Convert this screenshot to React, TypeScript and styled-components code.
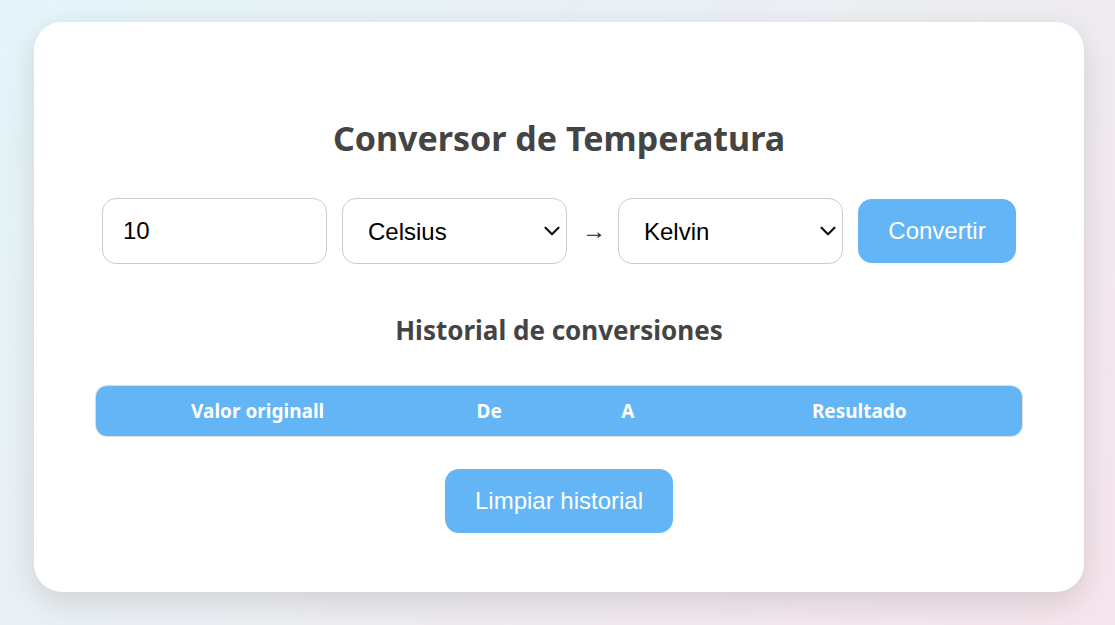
import React, { useState } from "react";
import styled, { createGlobalStyle } from "styled-components";
import { ChevronDown } from "lucide-react";

const Global = createGlobalStyle`
  html, body { margin: 0; padding: 0; }
  body {
    width: 1115px;
    height: 625px;
    overflow: hidden;
    background: linear-gradient(135deg, #e3f4f8 0%, #eceef2 50%, #f6e4ec 100%);
    font-family: "Noto Sans", "Open Sans", sans-serif;
  }
`;

const Page = styled.div`
  box-sizing: border-box;
  height: 625px;
  padding: 22px 31px 33px 34px;
`;

const Card = styled.div`
  box-sizing: border-box;
  width: 1050px;
  height: 570px;
  background: #fff;
  border-radius: 28px;
  box-shadow: 0 10px 30px rgba(0, 0, 0, 0.12);
  padding: 93px 61px 0;
  display: flex;
  flex-direction: column;
  align-items: center;
`;

const Title = styled.h1`
  margin: 0;
  font-size: 34px;
  line-height: 46px;
  font-weight: 700;
  color: #444;
`;

const Row = styled.div`
  margin-top: 37px;
  display: flex;
  align-items: center;
  gap: 15px;
`;

const Field = styled.input`
  box-sizing: border-box;
  width: 225px;
  height: 66px;
  padding: 0 20px;
  border: 1px solid #ccc;
  border-radius: 14px;
  font-family: "Liberation Sans", Arial, sans-serif;
  font-size: 24px;
  color: #000;
  outline: none;
  background: #fff;
`;

const SelectWrap = styled.div`
  position: relative;
  width: 225px;
  height: 66px;
`;

const Select = styled.select`
  box-sizing: border-box;
  width: 225px;
  height: 66px;
  padding: 0 36px 0 25px;
  border: 1px solid #ccc;
  border-radius: 14px;
  font-family: "Liberation Sans", Arial, sans-serif;
  font-size: 24px;
  color: #000;
  background: #fff;
  outline: none;
  appearance: none;
  -webkit-appearance: none;
`;

const Chevron = styled(ChevronDown)`
  position: absolute;
  right: 2px;
  top: 20px;
  color: #111;
  pointer-events: none;
`;

const Arrow = styled.span`
  font-family: "Liberation Sans", Arial, sans-serif;
  font-size: 24px;
  color: #222;
  width: 21px;
  text-align: center;
`;

const Button = styled.button<{ $w: number }>`
  box-sizing: border-box;
  width: ${(p) => p.$w}px;
  height: 64px;
  border: none;
  border-radius: 14px;
  background: #64b5f6;
  color: #fff;
  font-family: "Liberation Sans", Arial, sans-serif;
  font-size: 24px;
  cursor: pointer;
`;

const Subtitle = styled.h2`
  margin: 48px 0 0;
  font-size: 26px;
  line-height: 36px;
  font-weight: 700;
  color: #444;
`;

const Table = styled.table`
  margin-top: 37px;
  width: 928px;
  border-collapse: separate;
  border-spacing: 0;
  border: 1px solid #ddd;
  border-radius: 12px;
  overflow: hidden;
`;

const Th = styled.th<{ $w: number }>`
  width: ${(p) => p.$w}px;
  height: 50px;
  padding: 0;
  background: #64b5f6;
  color: #fff;
  font-size: 19px;
  font-weight: 700;
  text-align: center;
`;

const ClearWrap = styled.div`
  margin-top: 32px;
`;

const units = ["Celsius", "Fahrenheit", "Kelvin"];

function UnitSelect({ initial }: { initial: string }) {
  return (
    <SelectWrap>
      <Select defaultValue={initial}>
        {units.map((u) => (
          <option key={u}>{u}</option>
        ))}
      </Select>
      <Chevron size={26} strokeWidth={2} />
    </SelectWrap>
  );
}

export default function App() {
  const [value, setValue] = useState("10");
  return (
    <>
      <Global />
      <Page>
        <Card>
          <Title>Conversor de Temperatura</Title>
          <Row>
            <Field value={value} onChange={(e) => setValue(e.target.value)} />
            <UnitSelect initial="Celsius" />
            <Arrow>→</Arrow>
            <UnitSelect initial="Kelvin" />
            <Button $w={158}>Convertir</Button>
          </Row>
          <Subtitle>Historial de conversiones</Subtitle>
          <Table>
            <thead>
              <tr>
                <Th $w={324}>Valor originall</Th>
                <Th $w={140}>De</Th>
                <Th $w={138}>A</Th>
                <Th $w={326}>Resultado</Th>
              </tr>
            </thead>
          </Table>
          <ClearWrap>
            <Button $w={228}>Limpiar historial</Button>
          </ClearWrap>
        </Card>
      </Page>
    </>
  );
}
